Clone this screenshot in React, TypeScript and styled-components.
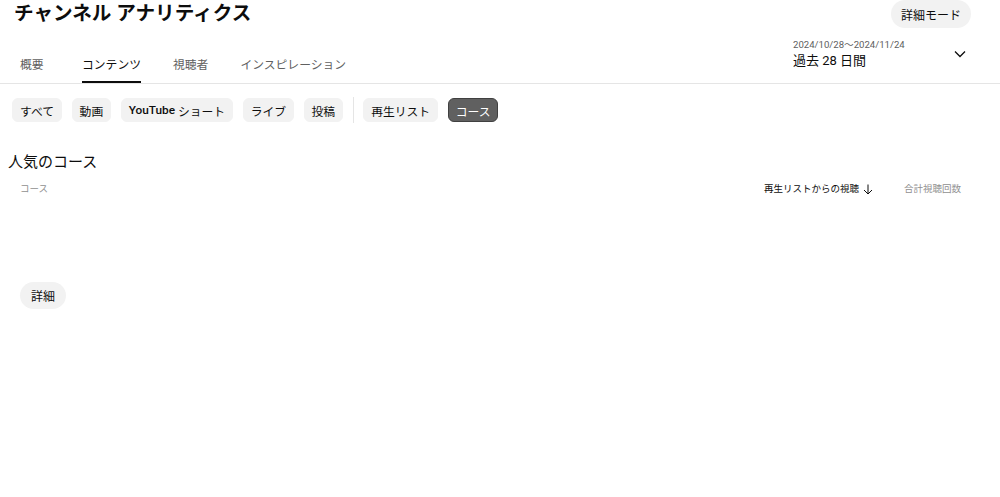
import styled, { createGlobalStyle } from 'styled-components';

const GlobalStyle = createGlobalStyle`
  body {
    margin: 0;
    background: #ffffff;
    font-family: Roboto, "Noto Sans CJK JP", "Noto Sans", sans-serif;
    color: #0d0d0d;
  }
`;

const tabs = ['概要', 'コンテンツ', '視聴者', 'インスピレーション'];
const chips = ['すべて', '動画', 'YouTube ショート', 'ライブ', '投稿'];

function App() {
  return (
    <Page>
      <GlobalStyle />
      <TopBar>
        <Title>チャンネル アナリティクス</Title>
        <PillButton>詳細モード</PillButton>
      </TopBar>
      <NavRow>
        <Tabs>
          {tabs.map((t) => (
            <Tab key={t} $active={t === 'コンテンツ'}>
              {t}
            </Tab>
          ))}
        </Tabs>
        <DateSelector>
          <DateText>
            <DateRange>2024/10/28〜2024/11/24</DateRange>
            <DateLabel>過去 28 日間</DateLabel>
          </DateText>
          <svg width="12" height="8" viewBox="0 0 12 8">
            <path d="M1 1.5 L6 6.5 L11 1.5" fill="none" stroke="#0d0d0d" strokeWidth="1.3" />
          </svg>
        </DateSelector>
      </NavRow>
      <ChipRow>
        {chips.map((c) => (
          <Chip key={c}>
            {c.startsWith('YouTube') ? (
              <>
                <b>YouTube</b> ショート
              </>
            ) : (
              c
            )}
          </Chip>
        ))}
        <ChipDivider />
        <Chip>再生リスト</Chip>
        <Chip $active>コース</Chip>
      </ChipRow>
      <Section>
        <SectionTitle>人気のコース</SectionTitle>
        <TableHeader>
          <HeaderCell>コース</HeaderCell>
          <Metrics>
            <HeaderCell $strong>
              再生リストからの視聴
              <svg width="10" height="11" viewBox="0 0 10 11">
                <path d="M5 0.5 V10 M1 6 L5 10 L9 6" fill="none" stroke="#0d0d0d" strokeWidth="1" />
              </svg>
            </HeaderCell>
            <HeaderCell>合計視聴回数</HeaderCell>
          </Metrics>
        </TableHeader>
        <TableBody />
        <SmallPill>詳細</SmallPill>
      </Section>
    </Page>
  );
}
export default App;

const Page = styled.div`
  width: 1000px;
  min-height: 497px;
  background: #fff;
`;

const TopBar = styled.div`
  display: flex;
  justify-content: space-between;
  align-items: center;
  height: 28px;
  padding: 0 29px 0 14px;
`;

const Title = styled.h1`
  margin: 0;
  font-size: 19.6px;
  font-weight: 700;
  line-height: 28px;
  color: #0d0d0d;
`;

const PillButton = styled.button`
  height: 28px;
  padding: 0 10px;
  border: none;
  border-radius: 14px;
  background: #f2f2f2;
  font-family: inherit;
  font-size: 12px;
  font-weight: 400;
  color: #0d0d0d;
`;

const NavRow = styled.div`
  display: flex;
  justify-content: space-between;
  height: 55px;
  border-bottom: 1px solid #e5e5e5;
`;

const Tabs = styled.div`
  display: flex;
  align-items: flex-end;
  gap: 32px;
  padding-left: 20px;
`;

const Tab = styled.div<{ $active?: boolean }>`
  min-width: 30px;
  padding-bottom: 8px;
  font-size: 11.8px;
  line-height: 16px;
  color: ${(p) => (p.$active ? '#0d0d0d' : '#606060')};
  border-bottom: 2px solid ${(p) => (p.$active ? '#0d0d0d' : 'transparent')};
`;

const DateSelector = styled.div`
  display: flex;
  align-items: center;
  justify-content: space-between;
  width: 173px;
  margin-top: 10px;
  padding-right: 34px;
  align-self: flex-start;
`;

const DateText = styled.div`
  display: flex;
  flex-direction: column;
`;

const DateRange = styled.span`
  font-size: 9.6px;
  line-height: 14px;
  color: #606060;
`;

const DateLabel = styled.span`
  font-size: 13px;
  line-height: 18px;
  color: #0d0d0d;
`;

const ChipRow = styled.div`
  display: flex;
  align-items: center;
  gap: 9.5px;
  padding: 13px 12px 0;
`;

const Chip = styled.div<{ $active?: boolean }>`
  height: 24px;
  box-sizing: border-box;
  display: flex;
  align-items: center;
  padding: 0 7px;
  border-radius: 6px;
  font-size: 11.8px;
  white-space: pre;
  background: ${(p) => (p.$active ? '#606060' : '#f2f2f2')};
  color: ${(p) => (p.$active ? '#ffffff' : '#0d0d0d')};
  border: 1px solid ${(p) => (p.$active ? '#404040' : '#f2f2f2')};
  b {
    font-weight: 500;
  }
`;

const ChipDivider = styled.div`
  width: 1px;
  height: 26px;
  background: #e5e5e5;
`;

const Section = styled.div`
  padding-top: 29px;
`;

const SectionTitle = styled.h2`
  margin: 0;
  padding-left: 8px;
  font-size: 15px;
  font-weight: 400;
  line-height: 20px;
`;

const TableHeader = styled.div`
  display: flex;
  justify-content: space-between;
  align-items: center;
  margin-top: 10px;
  padding: 0 39px 0 20px;
`;

const Metrics = styled.div`
  display: flex;
  gap: 31px;
`;

const HeaderCell = styled.div<{ $strong?: boolean }>`
  display: flex;
  align-items: center;
  gap: 4px;
  font-size: 9.5px;
  line-height: 14px;
  color: ${(p) => (p.$strong ? '#0d0d0d' : '#909090')};
`;

const TableBody = styled.div`
  height: 86px;
`;

const SmallPill = styled.button`
  margin-left: 20px;
  height: 27px;
  padding: 0 11px;
  border: none;
  border-radius: 14px;
  background: #f2f2f2;
  font-family: inherit;
  font-size: 12px;
  color: #0d0d0d;
`;
